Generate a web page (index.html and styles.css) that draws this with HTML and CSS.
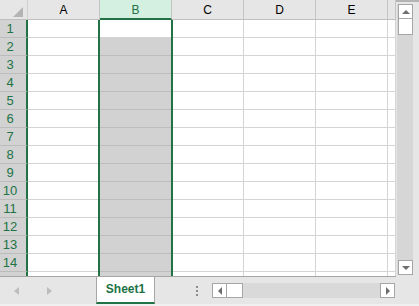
FILE: index.html
```html
<!DOCTYPE html>
<html>
<head>
    <meta charset="UTF-8">
    <title>Sheet1</title>
    <link rel="stylesheet" href="styles.css">
</head>
<body>
    <div class="excel">
        <div class="main">
            <div class="grid">
                <div class="heads">
                    <div class="corner"><span class="tri"></span></div>
                    <div class="colhead">A</div>
                    <div class="colhead sel">B</div>
                    <div class="colhead">C</div>
                    <div class="colhead">D</div>
                    <div class="colhead">E</div>
                    <div class="colhead f"></div>
                </div>
                <div class="row"><div class="rowhead">1</div><div class="cell"></div><div class="cell active"></div><div class="cell"></div><div class="cell"></div><div class="cell"></div><div class="cell f"></div></div>
                <div class="row"><div class="rowhead">2</div><div class="cell"></div><div class="cell b"></div><div class="cell"></div><div class="cell"></div><div class="cell"></div><div class="cell f"></div></div>
                <div class="row"><div class="rowhead">3</div><div class="cell"></div><div class="cell b"></div><div class="cell"></div><div class="cell"></div><div class="cell"></div><div class="cell f"></div></div>
                <div class="row"><div class="rowhead">4</div><div class="cell"></div><div class="cell b"></div><div class="cell"></div><div class="cell"></div><div class="cell"></div><div class="cell f"></div></div>
                <div class="row"><div class="rowhead">5</div><div class="cell"></div><div class="cell b"></div><div class="cell"></div><div class="cell"></div><div class="cell"></div><div class="cell f"></div></div>
                <div class="row"><div class="rowhead">6</div><div class="cell"></div><div class="cell b"></div><div class="cell"></div><div class="cell"></div><div class="cell"></div><div class="cell f"></div></div>
                <div class="row"><div class="rowhead">7</div><div class="cell"></div><div class="cell b"></div><div class="cell"></div><div class="cell"></div><div class="cell"></div><div class="cell f"></div></div>
                <div class="row"><div class="rowhead">8</div><div class="cell"></div><div class="cell b"></div><div class="cell"></div><div class="cell"></div><div class="cell"></div><div class="cell f"></div></div>
                <div class="row"><div class="rowhead">9</div><div class="cell"></div><div class="cell b"></div><div class="cell"></div><div class="cell"></div><div class="cell"></div><div class="cell f"></div></div>
                <div class="row"><div class="rowhead">10</div><div class="cell"></div><div class="cell b"></div><div class="cell"></div><div class="cell"></div><div class="cell"></div><div class="cell f"></div></div>
                <div class="row"><div class="rowhead">11</div><div class="cell"></div><div class="cell b"></div><div class="cell"></div><div class="cell"></div><div class="cell"></div><div class="cell f"></div></div>
                <div class="row"><div class="rowhead">12</div><div class="cell"></div><div class="cell b"></div><div class="cell"></div><div class="cell"></div><div class="cell"></div><div class="cell f"></div></div>
                <div class="row"><div class="rowhead">13</div><div class="cell"></div><div class="cell b"></div><div class="cell"></div><div class="cell"></div><div class="cell"></div><div class="cell f"></div></div>
                <div class="row"><div class="rowhead">14</div><div class="cell"></div><div class="cell b"></div><div class="cell"></div><div class="cell"></div><div class="cell"></div><div class="cell f"></div></div>
                <div class="row"><div class="rowhead">15</div><div class="cell"></div><div class="cell b"></div><div class="cell"></div><div class="cell"></div><div class="cell"></div><div class="cell f"></div></div>
                <div class="selection"></div>
            </div>
            <div class="vscroll">
                <div class="vtrack">
                    <div class="sbtn"><span class="arr up"></span></div>
                    <div class="vthumb"></div>
                    <div class="sbtn down"><span class="arr dn"></span></div>
                </div>
            </div>
        </div>
        <div class="tabbar">
            <div class="nav">
                <span class="nav-arr left"></span>
                <span class="nav-arr right"></span>
            </div>
            <div class="tab">Sheet1</div>
            <div class="dots"><i></i><i></i><i></i></div>
            <div class="hscroll">
                <div class="sbtn"><span class="arr lt"></span></div>
                <div class="hthumb"></div>
                <div class="sbtn end"><span class="arr rt"></span></div>
            </div>
        </div>
        <div class="status"></div>
    </div>
</body>
</html>
```

FILE: styles.css
```css
body {
    margin: 0;
    font-family: "Liberation Sans", Arial, sans-serif;
    background-color: #ffffff;
}
.excel {
    width: 419px;
    height: 306px;
    display: flex;
    flex-direction: column;
    overflow: hidden;
}
.main {
    display: flex;
    height: 277px;
}
.grid {
    position: relative;
    width: 396px;
    height: 277px;
    overflow: hidden;
    box-sizing: border-box;
    border-bottom: 1px solid #a6a6a6;
}
.heads {
    display: flex;
    height: 20px;
    background-color: #e6e6e6;
}
.corner {
    position: relative;
    width: 28px;
    box-sizing: border-box;
    border-right: 1px solid #d0d0d0;
    border-bottom: 1px solid #bfbfbf;
}
.corner .tri {
    position: absolute;
    right: 4px;
    bottom: 2px;
    width: 0;
    height: 0;
    border-left: 10px solid transparent;
    border-bottom: 10px solid #b4b4b4;
}
.colhead {
    width: 72px;
    box-sizing: border-box;
    border-right: 1px solid #c4c4c4;
    border-bottom: 1px solid #bfbfbf;
    text-align: center;
    font-size: 12px;
    line-height: 20px;
    color: #000000;
}
.colhead.sel {
    background-color: #d3f0e0;
    color: #217346;
    border-bottom: 2px solid #217346;
}
.colhead.f, .cell.f {
    width: 8px;
}
.row {
    display: flex;
    height: 18px;
}
.rowhead {
    width: 28px;
    box-sizing: border-box;
    padding-right: 6px;
    background-color: #d2d2d2;
    border-right: 2px solid #217346;
    border-bottom: 1px solid #bcbcbc;
    color: #217346;
    font-size: 13px;
    line-height: 18px;
    text-align: center;
}
.cell {
    width: 72px;
    box-sizing: border-box;
    border-right: 1px solid #d4d4d4;
    border-bottom: 1px solid #d4d4d4;
}
.cell.b {
    background-color: #d2d2d2;
    border-bottom-color: #bdbdbd;
}
.selection {
    position: absolute;
    top: 20px;
    left: 98px;
    bottom: 0;
    width: 75px;
    box-sizing: border-box;
    border-left: 2px solid #217346;
    border-right: 2px solid #217346;
}
.vscroll {
    width: 23px;
    height: 277px;
    box-sizing: border-box;
    padding-top: 4px;
    background-color: #e6e6e6;
    border-top: 2px solid #b4b4b4;
}
.vtrack {
    margin-left: 1px;
    width: 16px;
    height: 271px;
    margin-top: -2px;
    background-color: #d6d6d6;
    display: flex;
    flex-direction: column;
    align-items: flex-end;
}
.sbtn {
    width: 15px;
    height: 15px;
    box-sizing: border-box;
    background-color: #ffffff;
    border: 1px solid #a6a6a6;
    display: flex;
    align-items: center;
    justify-content: center;
}
.sbtn.down {
    margin-top: auto;
}
.vthumb {
    width: 15px;
    height: 17px;
    margin-top: -1px;
    box-sizing: border-box;
    background-color: #ffffff;
    border: 1px solid #a6a6a6;
}
.arr {
    width: 0;
    height: 0;
}
.arr.up {
    border-left: 4px solid transparent;
    border-right: 4px solid transparent;
    border-bottom: 4px solid #6e6e6e;
}
.arr.dn {
    border-left: 4px solid transparent;
    border-right: 4px solid transparent;
    border-top: 4px solid #6e6e6e;
}
.arr.lt {
    border-top: 4px solid transparent;
    border-bottom: 4px solid transparent;
    border-right: 4px solid #6e6e6e;
}
.arr.rt {
    border-top: 4px solid transparent;
    border-bottom: 4px solid transparent;
    border-left: 4px solid #6e6e6e;
}
.tabbar {
    display: flex;
    align-items: center;
    height: 27px;
    background-color: #e6e6e6;
}
.nav {
    width: 96px;
    display: flex;
    align-items: center;
    padding-left: 14px;
    box-sizing: border-box;
    gap: 28px;
}
.nav-arr {
    width: 0;
    height: 0;
    border-top: 4px solid transparent;
    border-bottom: 4px solid transparent;
}
.nav-arr.left {
    border-right: 5px solid #bdbdbd;
}
.nav-arr.right {
    border-left: 5px solid #bdbdbd;
}
.tab {
    align-self: stretch;
    width: 59px;
    box-sizing: border-box;
    background-color: #ffffff;
    border-left: 1px solid #a6a6a6;
    border-right: 1px solid #a6a6a6;
    border-bottom: 2px solid #217346;
    color: #217346;
    font-weight: bold;
    font-size: 12px;
    line-height: 25px;
    text-align: center;
}
.dots {
    margin-left: 41px;
    display: flex;
    flex-direction: column;
    gap: 2px;
}
.dots i {
    display: block;
    width: 2px;
    height: 2px;
    background-color: #8c8c8c;
}
.hscroll {
    margin-left: 14px;
    width: 183px;
    height: 15px;
    display: flex;
    background-color: #d9d9d9;
}
.hthumb {
    width: 17px;
    height: 15px;
    margin-left: -1px;
    box-sizing: border-box;
    background-color: #ffffff;
    border: 1px solid #a6a6a6;
}
.sbtn.end {
    margin-left: auto;
}
.status {
    height: 2px;
    background-color: #f0f0f0;
}
```
